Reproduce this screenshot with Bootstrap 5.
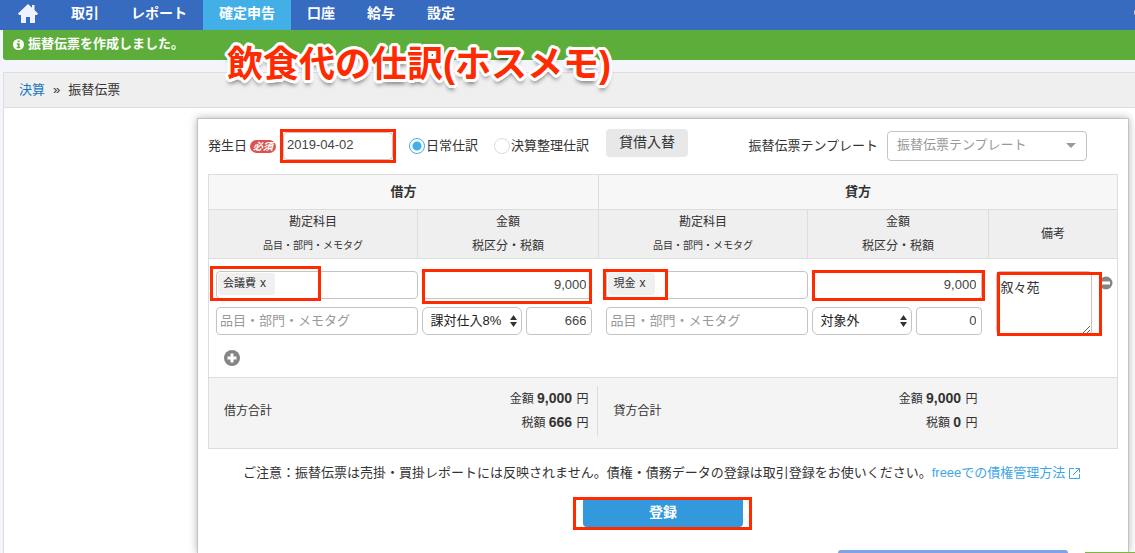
<!DOCTYPE html>
<html lang="ja">
<head>
<meta charset="utf-8">
<meta name="viewport" content="width=device-width, initial-scale=1">
<title>振替伝票</title>
<link href="https://cdn.jsdelivr.net/npm/bootstrap@5.3.0/dist/css/bootstrap.min.css" rel="stylesheet">
<style>
:root { --line: #ddd; --field: #c4c4c4; --callout: #ff2a00; }
body { font-family: "Liberation Sans", "Noto Sans CJK JP", sans-serif; font-size: 13px; line-height: 20px; color: #333; background: #f4f5fa; overflow-x: hidden; }
.topbar { background: #366bbf; height: 30px; }
.topbar .navbar-nav .nav-link { color: #fff; font-size: 14px; font-weight: 700; line-height: 20px; padding: 3px 16px 7px; }
.topbar .navbar-nav .nav-link.home { padding: 4px 17px 6px 18px; }
.topbar .navbar-nav .nav-link.active { background: #43afe7; }
.avatar { width: 9px; height: 9px; right: -8px; top: 8px; background: #d8d4dd; }
.notice { margin-left: 3px; height: 30px; padding: 4px 10px 6px; background: #5cad3a; color: #fff; font-weight: 700; border-radius: 0 0 0 3px; }
.headline { left: 227px; top: 41px; font-size: 36px; line-height: 48px; font-weight: 700; color: var(--callout); z-index: 5;
  text-shadow: 3px 0 #fff, -3px 0 #fff, 0 3px #fff, 0 -3px #fff, 2px 2px #fff, -2px 2px #fff, 2px -2px #fff, -2px -2px #fff, 3px 1px #fff, -3px 1px #fff, 3px -1px #fff, -3px -1px #fff, 1px 3px #fff, -1px 3px #fff, 1px -3px #fff, -1px -3px #fff, 0 5px 4px rgba(0,0,0,.5); }
.crumbs { margin: 12px 0 0 3px; height: 36px; padding: 0 15px; background: #efefef; border: solid var(--line); border-width: 1px 0 1px 1px; }
.crumbs .breadcrumb-item + .breadcrumb-item { padding-left: 8px; }
.crumbs .breadcrumb-item + .breadcrumb-item::before { padding-right: 8px; color: #333; content: "»"; }
.crumbs a { color: #1878c0; }
.workspace { margin-left: 3px; padding: 10px 6px 0 193px; background: #fff; border-left: 1px solid var(--line); overflow: hidden; }
.panel { padding: 0 10px; border: 1px solid #c3c3c3; border-bottom: 0; background: #fff; box-shadow: 0 0 8px rgba(0,0,0,.3); min-height: 435px; }
.toolbar { height: 53px; margin-bottom: 2px; }
.need { background: #d9534f; color: #fff; font-size: 10px; font-style: italic; line-height: 13px; font-weight: 700; border-radius: 7px; padding: 0 3px; margin: 2px 7px 0 3px; }
.box { border: 1px solid var(--field); border-radius: 4px; background: #fff; color: #444; font-size: 13px; line-height: 20px; height: 28px; padding: 2px 5px 4px 3px; min-width: 0; }
.box::placeholder { color: #999; }
.box:focus { outline: 1px solid #43afe7; }
.date { width: 110px; }
.kind { appearance: none; width: 16px; height: 16px; margin: 0 1px 0 0; border: 1px solid #d7dae2; border-radius: 50%; background: #fff; }
.kind:checked { border-color: #43afe7; background: radial-gradient(circle, #43afe7 4px, #fff 5px); }
.swap { background: #e8e8e8; border-radius: 4px; font-size: 14px; line-height: 20px; padding: 3px 13px 5px; color: #333; margin: 0 0 6px 17px; }
.template { width: 200px; height: 30px; padding: 0 9px 2px; margin: 0 31px 0 9px; appearance: none; color: #999;
  background: #fff url("data:image/svg+xml,%3Csvg xmlns='http://www.w3.org/2000/svg' width='10' height='5'%3E%3Cpath d='M0 0h10L5 5z' fill='%23999'/%3E%3C/svg%3E") no-repeat right 10px center; }
.ledger { table-layout: fixed; width: 100%; border: 1px solid var(--line); }
.ledger th { text-align: center; font-weight: 400; font-size: 12px; line-height: 24px; border: 1px solid var(--line); padding: 0; }
.ledger .sides th { background: #f7f7f7; font-weight: 700; font-size: 13px; line-height: 34px; }
.ledger .heads th { background: #efefef; height: 49px; }
.ledger .heads small { font-size: 10px; display: block; }
.ledger tbody td { padding: 12px 0 11px; vertical-align: top; }
.ledger tbody td.account { padding-left: 8px; }
.ledger tbody td.account:first-child { padding-left: 7px; }
.ledger tbody td.amount { padding-left: 4px; padding-right: 6px; }
.ledger tbody td.memo { padding-left: 8px; }
.num { text-align: right; }
.stack { display: grid; gap: 8px; }
.token { background: #f0f0f0; border-radius: 3px; font-size: 11px; line-height: 20px; height: 22px; padding: 0 9px 0 5px; color: #333; white-space: nowrap; }
.token i { font-style: normal; font-size: 12px; margin-left: 1px; }
.box.tokens { padding: 1px 1px 3px; }
.tokens input { min-width: 0; width: 20px; }
.box.tax { width: 100px; flex: none; padding: 0 8px; appearance: none; color: #222;
  background: #fff url("data:image/svg+xml,%3Csvg xmlns='http://www.w3.org/2000/svg' width='7' height='12'%3E%3Cpath d='M0 5 3.500 0 7 5zM0 7h7l-3.500 5z' fill='%23333'/%3E%3C/svg%3E") no-repeat right 4px center; border-radius: 6px; }
.box.remark { width: 96px; height: 64px; padding: 6px 4px 6px 3px; resize: vertical; display: block; color: #333; }
.add { margin: 15px 0 0 8px; }
.ledger tfoot td { background: #f4f4f4; border-top: 1px solid var(--line); padding: 8px 0 12px; font-size: 12px; line-height: 23px; height: 71px; }
.sum { height: 50px; padding: 0 11px 0 15px; }
.sum.split { padding-right: 9px; border-right: 1px solid var(--line); }
.sum b { font-size: 14px; margin-right: 1px; }
.advice { margin: 14px 3px 0 0; text-align: center; }
.advice a { color: #3fa6e6; }
.actions { margin-top: 17px; }
.submit { background: #3398dc; color: #fff; font-weight: 700; font-size: 14px; line-height: 20px; width: 160px; height: 27px; padding: 2px 0 5px; border-radius: 0 0 4px 4px; display: block; }
/* red rectangles drawn over the form */
.callout-box { position: absolute; border: 3px solid var(--callout); pointer-events: none; z-index: 2; }
.around { inset: -3px; }
.over-debit { inset: -2px 0 -5px; }
.over-credit { inset: -1px -3px -2px 0; }
.over-token { inset: -5px auto -2px -6px; width: 111px; }
.over-token.short { inset: -2px auto -1px -3px; width: 65px; }
.over-submit { inset: -3px -9px -3px -10px; }
.over-remark { inset: 1px auto -1px 1px; width: 105px; }
.peek-chat { right: 67px; width: 230px; height: 3px; background: #7ba3e6; border-radius: 4px 4px 0 0; }
.peek-help { right: 0; width: 50px; height: 1px; background: #79b843; }
</style>
</head>
<body>
<nav class="topbar navbar navbar-expand p-0 position-relative align-items-start">
  <div class="navbar-nav">
    <a class="nav-link home" href="#" aria-label="ホーム"><svg class="d-block" width="20" height="20" viewBox="0 0 20 20" fill="#eef3ff"><path d="M10 0 0 9.500 1 11h2v8h5v-6h4v6h5v-8h2l1-1.500-3.500-3.400V1H14v2.700z"/></svg></a>
    <a class="nav-link" href="#">取引</a>
    <a class="nav-link" href="#">レポート</a>
    <a class="nav-link active" href="#" aria-current="page">確定申告</a>
    <a class="nav-link" href="#">口座</a>
    <a class="nav-link" href="#">給与</a>
    <a class="nav-link" href="#">設定</a>
  </div>
  <span class="avatar position-absolute rounded-circle"></span>
</nav>
<div class="notice d-flex align-items-center" role="status">
  <svg width="11" height="11" viewBox="0 0 12 12" class="me-1"><circle cx="6" cy="6" r="6" fill="#fff"/><path d="M5 1.500h2.200v2H5zM4 4.600h3.200v4H8V10H4V8.600h1V6H4z" fill="#5cad3a"/></svg>振替伝票を作成しました。
</div>
<div class="headline position-absolute text-nowrap">飲食代の仕訳(ホスメモ)</div>
<nav class="crumbs d-flex align-items-center" aria-label="パンくず">
  <ol class="breadcrumb m-0">
    <li class="breadcrumb-item"><a class="text-decoration-none" href="#">決算</a></li>
    <li class="breadcrumb-item">振替伝票</li>
  </ol>
</nav>
<main class="workspace">
  <form class="panel">
    <div class="toolbar d-flex align-items-center text-nowrap">
      <label for="date">発生日</label><span class="need">必須</span>
      <div class="position-relative"><input id="date" class="box date" type="text" value="2019-04-02"><span class="callout-box around"></span></div>
      <div class="d-flex align-items-center ms-3"><input class="kind" type="radio" name="kind" id="daily" checked><label for="daily">日常仕訳</label></div>
      <div class="d-flex align-items-center ms-3"><input class="kind" type="radio" name="kind" id="closing"><label for="closing">決算整理仕訳</label></div>
      <button class="swap border-0" type="button">貸借入替</button>
      <label class="ms-auto" for="tpl">振替伝票テンプレート</label>
      <select id="tpl" class="box template"><option>振替伝票テンプレート</option></select>
    </div>
    <table class="ledger">
      <colgroup><col style="width:23%"><col style="width:19.9%"><col style="width:23%"><col style="width:19.9%"><col style="width:14.2%"></colgroup>
      <thead>
        <tr class="sides"><th colspan="2">借方</th><th colspan="3">貸方</th></tr>
        <tr class="heads">
          <th>勘定科目<small>品目・部門・メモタグ</small></th><th>金額<br>税区分・税額</th>
          <th>勘定科目<small>品目・部門・メモタグ</small></th><th>金額<br>税区分・税額</th>
          <th>備考</th>
        </tr>
      </thead>
      <tbody>
        <tr>
          <td class="account"><div class="stack">
            <div class="position-relative"><div class="box tokens d-flex align-items-center"><span class="token">会議費 <i>x</i></span><input class="border-0 flex-grow-1 p-0 h-100" type="text" aria-label="借方 勘定科目"></div><span class="callout-box over-token"></span></div>
            <input class="box w-100" type="text" placeholder="品目・部門・メモタグ" aria-label="借方 品目・部門・メモタグ">
          </div>
          <button type="button" class="add btn p-0 border-0 d-block" aria-label="行を追加"><svg class="d-block" width="16" height="16" viewBox="0 0 16 16"><circle cx="8" cy="8" r="8" fill="#858585"/><path d="M6.500 3.500h3v3h3v3h-3v3h-3v-3h-3v-3h3z" fill="#fff"/></svg></button></td>
          <td class="amount"><div class="stack">
            <div class="position-relative"><input class="box num w-100 d-block" type="text" value="9,000" aria-label="借方 金額"><span class="callout-box over-debit"></span></div>
            <div class="d-flex gap-1"><select class="box tax" aria-label="借方 税区分"><option>課対仕入8%</option></select><input class="box num flex-grow-1" size="1" type="text" value="666" aria-label="借方 税額"></div>
          </div></td>
          <td class="account"><div class="stack">
            <div class="position-relative"><div class="box tokens d-flex align-items-center"><span class="token">現金 <i>x</i></span><input class="border-0 flex-grow-1 p-0 h-100" type="text" aria-label="貸方 勘定科目"></div><span class="callout-box over-token short"></span></div>
            <input class="box w-100" type="text" placeholder="品目・部門・メモタグ" aria-label="貸方 品目・部門・メモタグ">
          </div></td>
          <td class="amount"><div class="stack">
            <div class="position-relative"><input class="box num w-100 d-block" type="text" value="9,000" aria-label="貸方 金額"><span class="callout-box over-credit"></span></div>
            <div class="d-flex gap-1"><select class="box tax" aria-label="貸方 税区分"><option>対象外</option></select><input class="box num flex-grow-1" size="1" type="text" value="0" aria-label="貸方 税額"></div>
          </div></td>
          <td class="memo"><div class="d-flex align-items-start">
            <div class="position-relative"><textarea class="box remark" aria-label="備考">叙々苑</textarea><span class="callout-box over-remark"></span></div>
            <button type="button" class="btn p-0 border-0 mt-1 ms-2" aria-label="行を削除"><svg class="d-block" width="13" height="16" viewBox="0 0 13 16"><circle cx="6" cy="8" r="6.500" fill="#858585"/><path d="M2 6.500h8v3H2z" fill="#fff"/></svg></button>
          </div></td>
        </tr>
      </tbody>
      <tfoot>
        <tr>
          <td colspan="2"><div class="sum split d-flex align-items-center justify-content-between"><span>借方合計</span><div class="text-end"><div>金額 <b>9,000</b> 円</div><div>税額 <b>666</b> 円</div></div></div></td>
          <td colspan="2"><div class="sum d-flex align-items-center justify-content-between"><span>貸方合計</span><div class="text-end"><div>金額 <b>9,000</b> 円</div><div>税額 <b>0</b> 円</div></div></div></td>
          <td></td>
        </tr>
      </tfoot>
    </table>
    <p class="advice">ご注意：振替伝票は売掛・買掛レポートには反映されません。債権・債務データの登録は取引登録をお使いください。<a class="text-decoration-none" href="#">freeeでの債権管理方法 <svg width="11" height="11" viewBox="0 0 11 11" fill="none" stroke="currentColor"><path d="M5 .5H.5v10h10V6M6.500.5h4v4M10.500.5 4 7"/></svg></a></p>
    <div class="actions d-flex justify-content-center"><div class="position-relative"><button class="submit border-0" type="submit">登録</button><span class="callout-box over-submit"></span></div></div>
  </form>
</main>
<div class="peek-chat position-fixed bottom-0"></div>
<div class="peek-help position-fixed bottom-0"></div>
<script src="https://cdn.jsdelivr.net/npm/bootstrap@5.3.0/dist/js/bootstrap.bundle.min.js"></script>
</body>
</html>
